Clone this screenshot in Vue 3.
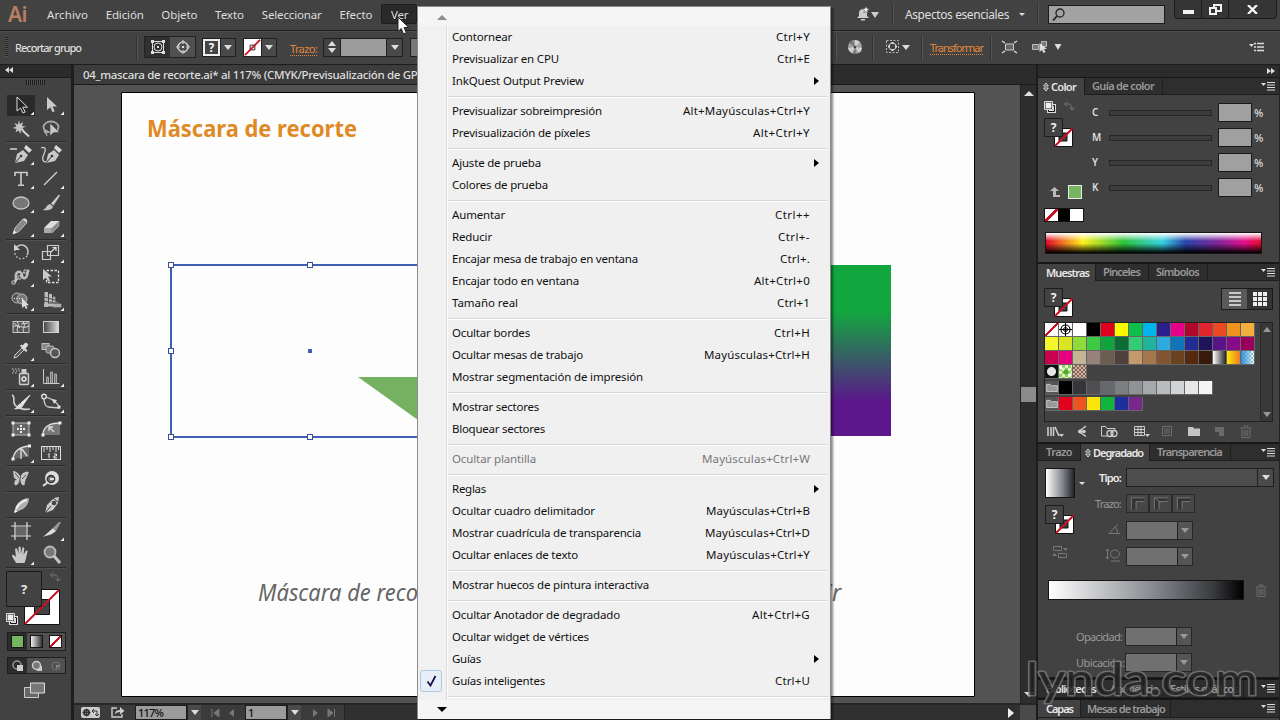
<script setup>
import { ref } from "vue";

// Tracks a label out or in so that it takes exactly the given width in px.
const vFit = {
  mounted(el, { value }) {
    const natural = el.getBoundingClientRect().width;
    const count = el.textContent.trim().length;
    el.style.letterSpacing = `${((value - natural) / count).toFixed(3)}px`;
  },
};

const mainMenu = [
  { label: "Archivo", w: 41 },
  { label: "Edición", w: 38 },
  { label: "Objeto", w: 36 },
  { label: "Texto", w: 29 },
  { label: "Seleccionar", w: 60 },
  { label: "Efecto", w: 33 },
  { label: "Ver", w: 17 },
];
const openMenu = ref("Ver");

const viewMenu = [
  [
    { label: "Contornear", w: 60, key: "Ctrl+Y", kw: 34 },
    { label: "Previsualizar en CPU", w: 107, key: "Ctrl+E", kw: 33 },
    { label: "InkQuest Output Preview", w: 132, sub: true },
  ],
  [
    { label: "Previsualizar sobreimpresión", w: 150, key: "Alt+Mayúsculas+Ctrl+Y", kw: 127 },
    { label: "Previsualización de píxeles", w: 138, key: "Alt+Ctrl+Y", kw: 57 },
  ],
  [
    { label: "Ajuste de prueba", w: 89, sub: true },
    { label: "Colores de prueba", w: 96 },
  ],
  [
    { label: "Aumentar", w: 53, key: "Ctrl++", kw: 35 },
    { label: "Reducir", w: 40, key: "Ctrl+-", kw: 32 },
    { label: "Encajar mesa de trabajo en ventana", w: 186, key: "Ctrl+.", kw: 30 },
    { label: "Encajar todo en ventana", w: 127, key: "Alt+Ctrl+0", kw: 56 },
    { label: "Tamaño real", w: 66, key: "Ctrl+1", kw: 33 },
  ],
  [
    { label: "Ocultar bordes", w: 78, key: "Ctrl+H", kw: 36 },
    { label: "Ocultar mesas de trabajo", w: 131, key: "Mayúsculas+Ctrl+H", kw: 106 },
    { label: "Mostrar segmentación de impresión", w: 191 },
  ],
  [
    { label: "Mostrar sectores", w: 87 },
    { label: "Bloquear sectores", w: 93 },
  ],
  [{ label: "Ocultar plantilla", w: 84, key: "Mayúsculas+Ctrl+W", kw: 108, disabled: true }],
  [
    { label: "Reglas", w: 34, sub: true },
    { label: "Ocultar cuadro delimitador", w: 143, key: "Mayúsculas+Ctrl+B", kw: 104 },
    { label: "Mostrar cuadrícula de transparencia", w: 189, key: "Mayúsculas+Ctrl+D", kw: 105 },
    { label: "Ocultar enlaces de texto", w: 126, key: "Mayúsculas+Ctrl+Y", kw: 104 },
  ],
  [{ label: "Mostrar huecos de pintura interactiva", w: 197 }],
  [
    { label: "Ocultar Anotador de degradado", w: 168, key: "Alt+Ctrl+G", kw: 58 },
    { label: "Ocultar widget de vértices", w: 137 },
    { label: "Guías", w: 29, sub: true },
    { label: "Guías inteligentes", w: 93, key: "Ctrl+U", kw: 35, checked: true },
  ],
];

// Tool icons, drawn in a 30x24 cell. `more` puts the flyout corner on the cell.
const toolGroups = [
  [
    { active: true, more: true, svg: '<path d="M11 4v14l3.500-3 2.500 5 2.200-1-2.400-4.800h4.700z" fill="#222" stroke="#ddd"/>' },
    { more: true, svg: '<path d="M11 4v13l3.300-2.800 2.200 5 2.200-1-2.200-4.600h4.500z" fill="#c9c9c9"/>' },
    { svg: '<path d="M13 3l1 4 3-2-1 4 4 .5-3.500 1.500 2 3-3.500-1-.5 4-2-3.500-3 2 1-3.500-4-1 4-1.500-2-3.500 3.500 1.500z" fill="#c4c4c4"/><path d="M16 13l7 6.500" stroke="#d0d0d0" stroke-width="2"/>' },
    { svg: '<ellipse cx="15" cy="10" rx="7.500" ry="5.500" fill="none" stroke="#aaa" stroke-width="1.800"/><path d="M10 13c-3 1-2 4 1 3s0-3-2-2l2 5" fill="none" stroke="#bbb"/><path d="M14 6v13l3.500-3.500h6z" fill="#c8c8c8" stroke="#444" stroke-width=".6"/>' },
  ],
  [
    { more: true, svg: '<path d="M4 6h7" stroke="#d5d5d5" stroke-width="1.500"/><path d="M9 20l2-9 6-4 5 5-4 6z" fill="#c9c9c9"/><path d="M18 5l2-3 6 5-3 3z" fill="#d9d9d9"/><path d="M9.500 19.500l5-6" stroke="#333"/><circle cx="15" cy="13" r="1.300" fill="#333"/>' },
    { svg: '<path d="M5 5c5-2 5 2 3 6s-2 8 2 8" fill="none" stroke="#d0d0d0" stroke-width="1.300"/><path d="M10 20l2-9 6-4 5 5-4 6z" fill="#c9c9c9"/><path d="M18 5l2-3 6 5-3 3z" fill="#d9d9d9"/><path d="M10.500 19.500l5-6" stroke="#333"/><circle cx="16" cy="13" r="1.300" fill="#333"/>' },
    { more: true, svg: '<path d="M9 9V5.500h12V9M15 6v12M12 18.200h6" fill="none" stroke="#ccc" stroke-width="1.600"/>' },
    { more: true, svg: '<path d="M8 18L21 5" stroke="#ccc" stroke-width="1.400"/>' },
    { more: true, svg: '<ellipse cx="15" cy="12" rx="8" ry="6" fill="#777" stroke="#c4c4c4" stroke-width="1.300"/>' },
    { more: true, svg: '<path d="M23 3.500l1 1-6.500 10-2.500-2z" fill="#ccc"/><path d="M14 13l3 2.500c-1 4-6 4-10.500 3.500 4-1 3.500-5 7.500-6z" fill="#c4c4c4"/>' },
    { more: true, svg: '<path d="M7 19l2-6 8-9 4 3.500-8 9z" fill="#888" stroke="#c0c0c0"/><path d="M17 4c2-1.500 5 .5 4 3.500z" fill="#ddd"/><path d="M7 19l1-3.500 2.500 2z" fill="#eee"/>' },
    { more: true, svg: '<path d="M8 13l7-7h8l-7 7z" fill="#ddd"/><path d="M8 13v5h7.500v-5z" fill="#aaa"/><path d="M16 13l7-7v5l-7 7z" fill="#8a8a8a" stroke="#c5c5c5" stroke-width=".6"/>' },
  ],
  [
    { more: true, svg: '<path d="M10 7a6.500 6.500 0 0 1 11 7" fill="none" stroke="#c8c8c8" stroke-width="1.500"/><path d="M21 15a6.800 6.800 0 0 1-12-6" fill="none" stroke="#c8c8c8" stroke-width="1.400" stroke-dasharray="1.500 2"/><path d="M8 3v6h6z" fill="#d0d0d0"/>' },
    { more: true, svg: '<path d="M11.500 4.500h11v10h-11zM6.500 10.500h8v8h-8z" fill="none" stroke="#ccc" stroke-width="1.200"/><path d="M15 11l5-5M16.500 6.500H20V10" fill="none" stroke="#ddd" stroke-width="1.200"/>' },
    { more: true, svg: '<path d="M7 18c6-1 0-9 5-11s3 8 7 6 1-6 4-8" fill="none" stroke="#bbb" stroke-width="2.600"/><path d="M8 18L19 6" stroke="#ddd"/><path d="M6 16h3v3H6zM12 11h3v3h-3zM18 5h3v3h-3z" fill="#444" stroke="#ddd" stroke-width=".8"/>' },
    { svg: '<path d="M10.500 5.500h12v12h-12z" fill="none" stroke="#ddd" stroke-dasharray="2.500 1.500" stroke-width="1.300"/><path d="M7 4v11l3-2.500 2 4 2-1-2-4h4z" fill="#ccc"/>' },
    { more: true, svg: '<circle cx="11" cy="9" r="5" fill="#555" stroke="#bbb"/><circle cx="16" cy="10" r="5" fill="#777" stroke="#bbb"/><path d="M8 9.500h9" stroke="#eee" stroke-dasharray="1 1.500"/><path d="M16 9v10l2.500-2 1.500 3 1.500-.8-1.400-2.900H23z" fill="#ddd"/>' },
    { more: true, svg: '<path d="M8.500 3h3.500v15H8.500zM13 5h3v9h-3zM8 14.500h10v3H8z" fill="#bbb"/><path d="M17 8h2v6h-2zM17 15h8v3h-8zM17 12l5 2" fill="#aaa" stroke="#bbb" stroke-width=".6"/><path d="M8 8l11 3M8 12l11 2" stroke="#555"/>' },
  ],
  [
    { svg: '<rect x="7" y="6.500" width="16" height="11" fill="#555" stroke="#c8c8c8"/><path d="M7 12c5-4 9 3 16-1M11 7c4 3-2 7 1 10M17 7c4 3-2 7 1 10M8 8l6 5M15 9l7-1" fill="none" stroke="#ddd"/>' },
    { svg: '<defs><linearGradient id="gt"><stop offset="0" stop-color="#444"/><stop offset="1" stop-color="#ddd"/></linearGradient></defs><rect x="7.500" y="6.500" width="15" height="11" fill="url(#gt)" stroke="#d0d0d0"/>' },
    { more: true, svg: '<path d="M8 19l1-3 7-7 2 2-7 7z" fill="#555" stroke="#ccc"/><path d="M14 7l6 6 1.500-1.500-2-2 2.500-3c.8-1.200-1.500-3.500-3-2.500l-2.500 2.500-1.200-1z" fill="#ddd"/>' },
    { svg: '<rect x="6" y="4.500" width="7" height="6" fill="#888" stroke="#bbb"/><rect x="10" y="7" width="8" height="7" rx="2" fill="#777" stroke="#bbb"/><circle cx="19" cy="14" r="4.500" fill="#555" stroke="#c4c4c4" stroke-width="1.400"/>' },
  ],
  [
    { more: true, svg: '<rect x="13.500" y="8.500" width="9" height="11" rx="1" fill="#555" stroke="#ccc" stroke-width="1.400"/><path d="M15.500 4h5v4h-5z" fill="#ccc"/><circle cx="18" cy="14" r="2" fill="none" stroke="#eee" stroke-width="1.300"/><path d="M6 4h8M7 6h7M6 8h5" stroke="#ccc" stroke-dasharray="1.500 1.500"/>' },
    { more: true, svg: '<path d="M7.500 4v14.500h16" fill="none" stroke="#ccc"/><path d="M10.500 18v-6h2v6M14.500 18V7h2v11M18.500 18V9h2v9" fill="#777" stroke="#bbb" stroke-width=".8"/>' },
  ],
  [
    { more: true, svg: '<path d="M6 4c4 2 0 6 3 10s10 5 15 4" fill="none" stroke="#ccc" stroke-width="1.600"/><path d="M24 4l-9 8 2 2z" fill="#eee" stroke="#ddd"/><path d="M15 12l2.500 2.500c-2 4-6 4-10 3.500 4-1 4-5 7.500-6z" fill="#ddd"/>' },
    { more: true, svg: '<path d="M8 7c0 4 1 8 4 9l11 1c0-4-6-9-13-11" fill="none" stroke="#ccc" stroke-width="1.300"/><circle cx="8" cy="5.500" r="2.300" fill="#444" stroke="#ddd" stroke-width="1.400"/><path d="M16 8l5 1-3 4zM21.500 14.500h3v3h-3z" fill="#ddd"/>' },
  ],
  [
    { svg: '<rect x="7" y="6" width="16" height="12" rx="2" fill="#666" stroke="#bbb"/><path d="M5.500 4.500h3v3h-3zM21.500 4.500h3v3h-3zM5.500 16.500h3v3h-3zM21.500 16.500h3v3h-3z" fill="#eee"/><path d="M15 8v8M11 12h8" stroke="#eee" stroke-width="2" stroke-dasharray="2 1"/>' },
    { svg: '<path d="M7 18c0-8 6-12 17-12v12z" fill="#777"/><path d="M7 18c0-8 6-12 17-12M18 15l-5-5m0 4v-4h4" fill="none" stroke="#ddd" stroke-width="1.300"/><path d="M5.500 16.500h3v3h-3zM22.500 4.500h3v3h-3z" fill="#eee"/>' },
    { more: true, svg: '<path d="M8 18C9 10 14 6 23 5v11h-5z" fill="#666"/><path d="M7 18C8 10 13 6 23 5M15 7v11M16 8l5 7" fill="none" stroke="#ddd" stroke-width="1.400"/><path d="M5.500 16.500h3v3h-3zM22 3.500h3v3h-3z" fill="#eee"/>' },
    { svg: '<rect x="5.500" y="5.500" width="19" height="13" fill="#444" stroke="#ddd"/><path d="M8 6v5M11 6v3M14 6v5M17 6v3M20 6v5M22.500 6v3" stroke="#ddd"/><path d="M12 13.500l1-1V17M18 13h2.500v2H18v2h3" fill="none" stroke="#eee"/>' },
  ],
  [
    { svg: '<path d="M14.500 10C12 4 7 4 7 4l1 7c1 1 3 1 3 1-3 1-3 5-2 6s4-1 5.500-5c0 4 2 6 4 5l1-5 3.500-8c-5-1-7.500 2-8.500 5z" fill="#c4c4c4"/><path d="M14.500 10l-1.500 6M9 6l4 5M20 8l-4 4" stroke="#555"/>' },
    { svg: '<circle cx="16" cy="11" r="7" fill="#ddd"/><circle cx="15" cy="12" r="3.600" fill="#777" stroke="#333" stroke-width="1.500"/><path d="M7 19l5-4M14 12h4" stroke="#ddd" stroke-width="2"/>' },
  ],
  [
    { svg: '<path d="M8 20l2-7q5-8 13-8 0 7-6 11z" fill="#b0b0b0"/><path d="M10 16c2-4 6-8 11-9" fill="none" stroke="#eee" stroke-width="2"/><path d="M8 20l1-3.500 2.500 2z" fill="#fff"/>' },
    { svg: '<path d="M9 20l2-8 7-7 5-1-1 6-5 7z" fill="#ccc"/><circle cx="18" cy="10" r="2.300" fill="#444"/><path d="M9 20l6-7M17 5l5 4" stroke="#333"/>' },
  ],
  [
    { svg: '<path d="M5 7h20M5 17h20M9 3v18M21 3v18" stroke="#ddd" stroke-width="1.200"/><path d="M10 8h10v8H10z" fill="#666"/>' },
    { more: true, svg: '<path d="M7 18l10-9 3 3c-4 4-8 4-13 6z" fill="#ddd"/><path d="M17 9l6-6h2l-5 9z" fill="#999"/>' },
    { more: true, svg: '<path d="M10 20c-1-3-4-5-4-8 1-1 3 1 4 2L9 6c1-1.500 2-1 2.500 1l1 4V4.500c1-1.500 2-1 2.300 0V11l1.500-6c1-1.300 2-.6 2 .8l-.8 6 2.500-4c1-1 2 0 1.500 1.200-1 3-1.500 8-3 11z" fill="#c8c8c8"/>' },
    { svg: '<circle cx="14" cy="9" r="5.500" fill="#777" stroke="#bbb" stroke-width="1.800"/><path d="M18 13l6 7" stroke="#c4c4c4" stroke-width="3"/>' },
  ],
];

const channels = ["C", "M", "Y", "K"];

const swatchRows = [
  ["none", "reg", "#ffffff", "#000000", "#e2001f", "#fffa00", "#0dbe4c", "#00b5ec", "#2a1f8d", "#e5008b", "#b0082a", "#e0252f", "#ea4924", "#f0911e", "#f4ae3b"],
  ["#f5f72c", "#d8e522", "#8edb3c", "#3dcb46", "#10a53c", "#0a6e33", "#33cb73", "#1fb49b", "#2babdf", "#0f74b8", "#222d93", "#1d145a", "#5a1489", "#870a86", "#98005c"],
  ["#c8004f", "#e6007e", "#c4b694", "#97827b", "#6b5e50", "#4f403b", "#c39a6b", "#a5774c", "#81552f", "#6d4220", "#55290f", "#371a0c", "gray", "sun", "sky"],
  ["dot", "leaf", "rug"],
];
const swatchFolders = [
  ["#000000", "#363438", "#4f4f53", "#67686d", "#7c7e81", "#909396", "#a5a8ac", "#b9bbbf", "#d1d3d6", "#e7e7e8", "#f5f5f5"],
  ["#e2001f", "#ea5520", "#fbe50a", "#10b63c", "#1c2f9c", "#77278e"],
];

function isColor(swatch) {
  return swatch.startsWith("#");
}

const handles = [
  [171, 265],
  [310, 265],
  [171, 351],
  [171, 437],
  [310, 437],
];
</script>

<template>
  <div class="app">
    <svg width="0" height="0" class="defs">
      <symbol id="proxy" viewBox="0 0 30 30">
        <path d="M10.500 10.500h18v18h-18z" fill="#fff" stroke="#111" />
        <path d="M15 15h8v8h-8z" fill="#3d3d3d" stroke="#111" />
        <path d="M11 28L28.500 10.500" stroke="#c8101e" stroke-width="2" />
        <path d="M.5.500h18v18H.5z" fill="#434343" stroke="#1c1c1c" />
        <text x="9.500" y="14" text-anchor="middle" fill="#f0f0f0" font-size="12" font-weight="700">?</text>
      </symbol>
      <symbol id="defaults" viewBox="0 0 12 12">
        <path d="M4.500 4.500h6v6h-6z" fill="none" stroke="#ddd" stroke-width="3" />
        <path d="M4.500 4.500h6v6h-6z" fill="none" stroke="#111" />
        <path d="M1 1h7v7H1z" fill="#eee" stroke="#111" />
        <path d="M.5.500h8v8h-8z" fill="none" stroke="#ddd" />
      </symbol>
      <symbol id="swap" viewBox="0 0 12 10">
        <path d="M2 3h4q3 0 3 5M4 .5L1.500 3 4 5.500M6.500 6.500L9 9l2.500-2.500" fill="none" stroke="#777" />
      </symbol>
      <symbol id="panelmenu" viewBox="0 0 14 10">
        <path d="M0 2h5L2.500 5z" fill="#ddd" />
        <path d="M6 1.500h8M6 4h8M6 6.500h8M6 9h8" stroke="#ddd" stroke-width="1.200" />
      </symbol>
      <symbol id="trash" viewBox="0 0 12 13">
        <path d="M.5 3h11M4 2.500V1h4v1.500M2 4v8.500h8V4M4.200 5v6M6 5v6M7.800 5v6" fill="none" stroke="#6c6c6c" />
      </symbol>
      <symbol id="folder" viewBox="0 0 13 10">
        <path d="M.5 9.500v-8h4l1.500 1.500h6.500v6.500z" fill="#999" stroke="#ccc" />
      </symbol>
      <symbol id="updown" viewBox="0 0 6 10">
        <path d="M.7 4L3 1l2.300 3zM.7 6L3 9l2.300-3z" fill="none" stroke="#ddd" />
      </symbol>
    </svg>

    <header class="menubar">
      <span class="logo">Ai</span>
      <nav>
        <span v-for="m in mainMenu" :key="m.label" class="menu-title" :class="{ open: m.label === openMenu }">
          <span v-fit="m.w">{{ m.label }}</span>
        </span>
      </nav>
      <div class="menubar-right">
        <svg class="bell" width="24" height="17" viewBox="0 0 24 17">
          <path d="M1 12l2-2V6q1-3 4-3 3 0 4 3v4l2 2z" fill="#ccc" />
          <path d="M5 13h4v1.500H5z" fill="#ccc" />
          <path d="M10 0l1 2.500 2.500.2-2 1.600.7 2.500L10 5.500 7.800 6.800l.7-2.500-2-1.600L9 2.500z" fill="#eee" stroke="#444" stroke-width=".5" />
          <path d="M15 6h8l-4 6z" fill="#ccc" />
        </svg>
        <i class="vline"></i>
        <span v-fit="104" class="workspace">Aspectos esenciales</span>
        <i class="tri small"></i>
        <i class="vline after"></i>
        <div class="search">
          <svg width="14" height="14" viewBox="0 0 14 14">
            <circle cx="8" cy="5" r="4" fill="none" stroke="#222" stroke-width="1.300" />
            <path d="M5 8l-4 4.500" stroke="#222" stroke-width="1.800" />
          </svg>
        </div>
        <div class="win-buttons">
          <span><i class="minimize"></i></span>
          <span>
            <svg width="13" height="11" viewBox="0 0 13 11">
              <path d="M5 1h7v6H5z" fill="none" stroke="#f2f2f2" stroke-width="2" />
              <path d="M1 4h6v6H1z" fill="#333" stroke="#f2f2f2" stroke-width="2" />
            </svg>
          </span>
          <span class="close">
            <svg width="11" height="9" viewBox="0 0 11 9">
              <path d="M1 0l9 9M10 0L1 9" stroke="#f2f2f2" stroke-width="2.400" />
            </svg>
          </span>
        </div>
      </div>
    </header>

    <div class="controlbar">
      <i class="grip-v"></i>
      <div class="selection-kind"><span v-fit="66">Recortar grupo</span></div>
      <i class="vline tall"></i>
      <div class="pair">
        <span class="on">
          <svg width="16" height="16" viewBox="0 0 16 16">
            <path d="M2.500 2.500h11v11h-11z" fill="none" stroke="#ddd" />
            <circle cx="8" cy="8" r="4" fill="none" stroke="#ddd" />
            <path d="M1 1h3v3H1zM12 1h3v3h-3zM1 12h3v3H1zM12 12h3v3h-3zM7 7h2v2H7z" fill="#ddd" />
          </svg>
        </span>
        <span>
          <svg width="16" height="16" viewBox="0 0 16 16">
            <circle cx="8" cy="8" r="5" fill="none" stroke="#ddd" stroke-width="1.200" />
            <path d="M7 7h2v2H7z" fill="#ddd" />
            <path d="M7 2h2v2H7zM7 12h2v2H7zM2 7h2v2H2zM12 7h2v2h-2z" fill="#555" stroke="#ddd" />
          </svg>
        </span>
      </div>
      <div class="drop-swatch fill-drop">
        <span class="q">?</span>
        <span class="arrow"><i class="tri"></i></span>
      </div>
      <div class="drop-swatch">
        <svg class="none" width="18" height="18" viewBox="0 0 18 18">
          <path d="M0 0h18v18H0z" fill="#fff" />
          <path d="M6.500 6.500h5v5h-5z" fill="none" stroke="#222" />
          <path d="M1 17L17 1" stroke="#c8101e" stroke-width="1.800" />
        </svg>
        <span class="arrow"><i class="tri"></i></span>
      </div>
      <span v-fit="27" class="link stroke-link">Trazo:</span>
      <div class="stroke-field">
        <span class="spin"><i class="tri up"></i><i class="tri"></i></span>
        <span class="value"></span>
        <span class="arrow"><i class="tri"></i></span>
      </div>
      <div class="stub"></div>

      <div class="control-right">
        <i class="vline tall"></i>
        <svg class="recolor" width="16" height="16" viewBox="0 0 16 16">
          <circle cx="8" cy="8" r="7" fill="#a2a2a2" />
          <path d="M8 8V1a7 7 0 0 1 5 2zM8 8l7 1a7 7 0 0 1-3 5zM8 8l-3 6a7 7 0 0 1-4-5z" fill="#cfcfcf" />
          <path d="M8 8L2 4a7 7 0 0 1 4-3zM8 8l1 7H6z" fill="#777" />
          <circle cx="8" cy="8" r="1.300" fill="#444" />
        </svg>
        <i class="vline tall"></i>
        <svg class="align" width="24" height="14" viewBox="0 0 24 14">
          <path d="M.5.500h12v12H.5z" fill="none" stroke="#bbb" stroke-dasharray="2 1.500" />
          <circle cx="6.500" cy="6.500" r="3.500" fill="none" stroke="#ccc" />
          <path d="M5.500 2h2v2h-2zM5.500 9h2v2h-2zM2 5.500h2v2H2zM9 5.500h2v2H9z" fill="#ddd" />
          <path d="M16 5h8l-4 5z" fill="#ddd" />
        </svg>
        <i class="vline tall"></i>
        <span v-fit="53" class="link">Transformar</span>
        <i class="vline tall"></i>
        <svg class="isolate" width="17" height="14" viewBox="0 0 17 14">
          <path d="M4.500 4h8v6h-8z" fill="#666" stroke="#ccc" />
          <path d="M1 1l3 2M16 1l-3 2M1 13l3-2M16 13l-3-2" stroke="#ddd" stroke-width="1.400" />
        </svg>
        <svg class="similar" width="30" height="16" viewBox="0 0 30 16">
          <path d="M.5 5.500h6v5h-6zM9.500 2.500h5v5h-5z" fill="#777" stroke="#bbb" />
          <path d="M7.500 4v9l2.500-2 1.500 3 2-1-1.500-3h3z" fill="#ddd" />
          <path d="M22.500 5h7l-3.500 6z" fill="#ddd" />
        </svg>
        <svg class="bar-menu" width="15" height="10" viewBox="0 0 15 10">
          <path d="M0 2h5L2.500 5z" fill="#ddd" />
          <path d="M5 1.500h2M8 1.500h7M5 5h2M8 5h7M5 8.500h2M8 8.500h7" stroke="#ddd" stroke-width="1.600" />
        </svg>
      </div>
    </div>

    <div class="body">
      <aside class="toolbox">
        <div class="toolbox-head">
          <svg width="8" height="6" viewBox="0 0 8 6"><path d="M4 0v6L0 3zM8 0v6L4 3z" fill="#ddd" /></svg>
        </div>
        <div class="grip-wrap"><i class="grip-h"></i></div>
        <div v-for="(group, g) in toolGroups" :key="g" class="tool-group">
          <span v-for="(tool, t) in group" :key="t" class="tool" :class="{ active: tool.active }">
            <svg width="30" height="24" viewBox="0 0 30 24">
              <g v-html="tool.svg" />
              <path v-if="tool.more" d="M28 18.500v3.500h-3.500z" fill="#eee" />
            </svg>
          </span>
        </div>
        <svg class="fill-stroke" width="62" height="58" viewBox="0 0 62 58">
          <path d="M18.500 19.500h35v35h-35z" fill="#fff" stroke="#111" />
          <path d="M28.500 29.500h15v15h-15z" fill="#434343" stroke="#111" />
          <path d="M19 54L53 20" stroke="#c8101e" stroke-width="2" />
          <path d="M.5 1.500h35v35H.5z" fill="#434343" stroke="#1a1a1a" />
          <text x="18" y="24" text-anchor="middle" fill="#e8e8e8" font-size="13" font-weight="700">?</text>
          <use href="#swap" x="43" y="2" width="12" height="10" />
          <use href="#defaults" x="0" y="43" width="12" height="12" />
        </svg>
        <div class="trio paint">
          <span class="on"><i class="chip green"></i></span>
          <span><i class="chip fade"></i></span>
          <span><i class="chip nothing"></i></span>
        </div>
        <div class="trio draw">
          <span class="on">
            <svg width="12" height="12" viewBox="0 0 12 12"><circle cx="5" cy="5" r="4" fill="none" stroke="#999" stroke-width="1.500" /><path d="M5 5h6v6H5z" fill="#ccc" /></svg>
          </span>
          <span>
            <svg width="12" height="12" viewBox="0 0 12 12"><path d="M6 6h5v5H6z" fill="#ccc" /><circle cx="5.500" cy="5.500" r="4" fill="#777" stroke="#ccc" stroke-width="1.500" /></svg>
          </span>
          <span>
            <svg width="12" height="12" viewBox="0 0 12 12"><circle cx="6" cy="6" r="4" fill="none" stroke="#777" /><path d="M6 5h4L6 9z" fill="#888" /></svg>
          </span>
        </div>
        <svg class="screen-mode" width="22" height="17" viewBox="0 0 22 17">
          <path d="M.5 5.500h14v10H.5z" fill="#666" stroke="#ccc" />
          <path d="M6.500 1h14v10h-14z" fill="#777" stroke="#ddd" />
        </svg>
      </aside>

      <main class="document">
        <div class="doc-tabs">
          <span v-fit="346" class="doc-tab">04_mascara de recorte.ai* al 117% (CMYK/Previsualización de GPU)</span>
        </div>
        <div class="doc-main">
          <div class="canvas">
            <svg width="946" height="618" viewBox="74 85 946 618">
              <defs>
                <linearGradient id="art" x1="0" y1="0" x2="0" y2="1">
                  <stop offset="0" stop-color="#12a73e" />
                  <stop offset=".27" stop-color="#12a73e" />
                  <stop offset=".8" stop-color="#5b178b" />
                  <stop offset="1" stop-color="#5b178b" />
                </linearGradient>
              </defs>
              <path d="M121.500 92.500h853v604h-853z" fill="#fdfdfd" stroke="#000" />
              <text class="art-title" x="147" y="137" textLength="210" lengthAdjust="spacingAndGlyphs">Máscara de recorte</text>
              <text class="art-note" x="258" y="601" textLength="160" lengthAdjust="spacingAndGlyphs">Máscara de reco</text>
              <text class="art-note" x="826" y="601">ir</text>
              <path d="M358 377h120v86z" fill="#76b161" />
              <path d="M700 265h191v171H700z" fill="url(#art)" />
              <path d="M171 265h300v172H171z" fill="none" stroke="#3f5fb5" stroke-width="2" />
              <rect v-for="([x, y], i) in handles" :key="i" :x="x - 2.500" :y="y - 2.500" width="5" height="5" fill="#fff" stroke="#3a4f94" />
              <path d="M308 349h4v4h-4z" fill="#3f5fb5" />
            </svg>
          </div>
          <div class="vscroll">
            <i class="tri up big"></i>
            <i class="thumb"></i>
            <i class="tri big"></i>
          </div>
        </div>
        <div class="statusbar">
          <svg width="19" height="11" viewBox="0 0 19 11">
            <rect width="19" height="11" rx="2" fill="#ccc" />
            <circle cx="5.500" cy="5.500" r="2.500" fill="none" stroke="#333" stroke-width="2" />
            <path d="M5.500 1.500v8M1.500 5.500h8" stroke="#333" />
            <path d="M13 2l-2 2 2 2M11 4h5v5M14 7l2 2 2-2" fill="none" stroke="#333" />
          </svg>
          <svg class="share" width="14" height="12" viewBox="0 0 14 12">
            <path d="M6 2H1v9h10V8" fill="none" stroke="#ccc" stroke-width="1.400" />
            <path d="M4 8q0-4 5-4V1l4.500 4L9 8.500V6Q6 6 4 8z" fill="#ccc" />
          </svg>
          <span class="field zoom"><b v-fit="25">117%</b></span>
          <span class="arrow"><i class="tri"></i></span>
          <svg class="nav" width="24" height="8" viewBox="0 0 24 8">
            <path d="M1 0v8M8 0v8L3 4z" stroke="#777" fill="#777" /><path d="M23 0v8l-5-4z" fill="#777" />
          </svg>
          <span class="field page"><b>1</b></span>
          <span class="arrow"><i class="tri"></i></span>
          <svg class="nav next" width="24" height="8" viewBox="0 0 24 8">
            <path d="M1 0v8l5-4z" fill="#777" /><path d="M16 0v8l5-4zM22.500 0v8" stroke="#777" fill="#777" />
          </svg>
          <div class="hscroll"><i class="tri right"></i></div>
          <i class="corner"></i>
        </div>
      </main>

      <aside class="dock">
        <div class="dock-head">
          <svg width="8" height="6" viewBox="0 0 8 6"><path d="M0 0v6l4-3zM4 0v6l4-3z" fill="#ddd" /></svg>
        </div>

        <section class="panel color-panel">
          <div class="tabs">
            <span class="tab on"><svg width="6" height="10"><use href="#updown" /></svg><b v-fit="25">Color</b></span>
            <span class="tab"><b v-fit="62">Guía de color</b></span>
            <svg class="panel-menu" width="14" height="10"><use href="#panelmenu" /></svg>
          </div>
          <div class="color-body">
            <div class="color-left">
              <div class="mini-row">
                <svg width="12" height="12"><use href="#defaults" /></svg>
                <svg width="12" height="10"><use href="#swap" /></svg>
              </div>
              <svg class="proxy" width="30" height="30"><use href="#proxy" /></svg>
              <div class="last-color">
                <svg width="10" height="11" viewBox="0 0 10 11"><path d="M4.500 0L9 4H6v4h4v2H3V4H0z" fill="#bbb" /></svg>
                <i class="chip green"></i>
              </div>
            </div>
            <div class="channels">
              <div v-for="c in channels" :key="c" class="channel">
                <b>{{ c }}</b><i class="track"></i><i class="amount"></i><span>%</span>
              </div>
            </div>
          </div>
          <div class="bw"><i class="nothing"></i><i class="black"></i><i class="white"></i></div>
          <div class="spectrum"></div>
        </section>

        <section class="panel swatch-panel">
          <div class="tabs">
            <span class="tab on"><b v-fit="43">Muestras</b></span>
            <span class="tab"><b v-fit="37">Pinceles</b></span>
            <span class="tab"><b v-fit="43">Símbolos</b></span>
            <svg class="panel-menu" width="14" height="10"><use href="#panelmenu" /></svg>
          </div>
          <div class="swatch-top">
            <svg class="proxy" width="30" height="30"><use href="#proxy" /></svg>
            <div class="views">
              <span class="lit"><svg width="12" height="14" viewBox="0 0 12 14"><path d="M0 1h12M0 5h12M0 9h12M0 13h12" stroke="#eee" stroke-width="1.600" /></svg></span>
              <span><svg width="14" height="14" viewBox="0 0 14 14"><path d="M2 0v14M7 0v14M12 0v14" stroke="#eee" stroke-width="4" stroke-dasharray="4 1" /></svg></span>
            </div>
          </div>
          <div class="swatch-box">
            <div class="swatch-list">
              <div v-for="(row, r) in swatchRows" :key="r" class="swatch-row">
                <template v-for="(s, i) in row" :key="i">
                  <i v-if="isColor(s)" class="sw" :style="{ background: s }"></i>
                  <i v-else-if="s !== 'reg'" class="sw" :class="s"></i>
                  <i v-else class="sw reg">
                    <svg width="13" height="13" viewBox="0 0 13 13"><path d="M6.500 0v13M0 6.500h13" stroke="#000" /><circle cx="6.500" cy="6.500" r="4.500" fill="none" stroke="#000" stroke-width="1.200" /><circle cx="6.500" cy="6.500" r="2" fill="none" stroke="#000" /></svg>
                  </i>
                </template>
              </div>
              <div v-for="(row, r) in swatchFolders" :key="'f' + r" class="swatch-row in-folder">
                <i class="sw dir"><svg width="12" height="9"><use href="#folder" /></svg></i>
                <i v-for="s in row" :key="s" class="sw" :style="{ background: s }"></i>
              </div>
            </div>
            <div class="swatch-scroll"><i class="tri up"></i><i class="tri"></i></div>
          </div>
          <svg class="swatch-tools" width="230" height="18" viewBox="0 0 230 18">
            <path d="M1 4v9M4 4v9M6.500 4v9M8 4l4 9" stroke="#ccc" stroke-width="1.600" />
            <path d="M12 11h5l-2.500 3zM98 11h5l-2.500 3z" fill="#ccc" />
            <path d="M39 3l-7 5.500 7 5M32 8.500h5" fill="none" stroke="#ccc" stroke-width="1.500" />
            <circle cx="37" cy="8.500" r="1.800" fill="#ccc" /><circle cx="33" cy="8.500" r="2" fill="#ccc" />
            <path d="M61 13h-6.500V3.500h4l1.500 2h8V8" fill="none" stroke="#ccc" />
            <circle cx="63" cy="10.500" r="3" fill="none" stroke="#ccc" stroke-width="1.300" /><circle cx="67" cy="10.500" r="3" fill="none" stroke="#ccc" stroke-width="1.300" />
            <path d="M87.500 3.500h10v9h-10zM91 3v10M94 3v10M87 6.500h11M87 9.500h11" fill="none" stroke="#ccc" />
            <path d="M115.500 3.500h9v9h-9zM117 6h6M117 8h6M117 10h6" fill="none" stroke="#6c6c6c" />
            <path d="M141 4h5l1 1.500h6V13h-12z" fill="#c4c4c4" />
            <path d="M168 4h9v9h-5V9h-4z" fill="#6a6a6a" />
            <use href="#trash" x="193" y="2" width="12" height="13" />
          </svg>
        </section>

        <section class="panel gradient-panel">
          <div class="tabs">
            <span class="tab first"><b v-fit="26">Trazo</b></span>
            <span class="tab on"><svg width="6" height="10"><use href="#updown" /></svg><b v-fit="50">Degradado</b></span>
            <span class="tab"><b v-fit="65">Transparencia</b></span>
            <svg class="panel-menu" width="14" height="10"><use href="#panelmenu" /></svg>
          </div>
          <div class="gradient-body">
            <div class="gradient-left">
              <div class="preview"><i class="big-fade"></i><i class="tri small"></i></div>
              <svg class="proxy" width="30" height="30"><use href="#proxy" /></svg>
              <svg class="reverse" width="16" height="14" viewBox="0 0 16 14"><path d="M1.500 1.500h8v4h-8zM6.500 8.500h8v4h-8z" fill="none" stroke="#777" /><path d="M11 3h5l-2.500 3zM0 11h5L2.500 8z" fill="#777" /></svg>
            </div>
            <div class="gradient-form">
              <div class="row lit"><label v-fit="22">Tipo:</label><span class="combo"><i></i><span class="arrow"><i class="tri"></i></span></span></div>
              <div class="row"><label v-fit="26">Trazo:</label>
                <span class="joins">
                  <svg v-for="n in 3" :key="n" width="22" height="18" viewBox="0 0 22 18"><path d="M5 15V3h13v3H9v9z" fill="#333" /><path d="M4.500 15V3h14M9.500 15V7h9" fill="none" stroke="#777" /><path v-if="n === 2" d="M5 3l6 5" stroke="#777" /></svg>
                </span>
              </div>
              <div class="row"><svg width="14" height="12" viewBox="0 0 14 12"><path d="M11 1L2 10.500h11M8 4q3 3 2.500 6" fill="none" stroke="#777" /></svg><span class="num"><i></i><span class="arrow"><i class="tri"></i></span></span></div>
              <div class="row"><svg width="16" height="14" viewBox="0 0 16 14"><path d="M2.500 1v10M1 3l1.500-2L4 3M1 9l1.500 2L4 9M6 13h9" fill="none" stroke="#777" /><ellipse cx="10" cy="6" rx="4.500" ry="4" fill="none" stroke="#777" /></svg><span class="num"><i></i><span class="arrow"><i class="tri"></i></span></span></div>
            </div>
          </div>
          <div class="ramp"><i></i><svg width="12" height="13"><use href="#trash" /></svg></div>
          <div class="row stop"><label v-fit="44">Opacidad:</label><span class="num"><i></i><span class="arrow"><i class="tri"></i></span></span></div>
          <div class="row stop"><label v-fit="45">Ubicación:</label><span class="num"><i></i><span class="arrow"><i class="tri"></i></span></span></div>
        </section>

        <section class="panel folded">
          <div class="tabs">
            <span class="tab strong"><b v-fit="50">Bibliotecas</b></span>
            <span class="tab"><b v-fit="48">Apariencia</b></span>
            <span class="tab"><b v-fit="68">Estilos gráficos</b></span>
            <svg class="panel-menu" width="14" height="10"><use href="#panelmenu" /></svg>
          </div>
        </section>
        <section class="panel folded">
          <div class="tabs">
            <span class="tab on"><b v-fit="27">Capas</b></span>
            <span class="tab"><b v-fit="78">Mesas de trabajo</b></span>
            <svg class="panel-menu" width="14" height="10"><use href="#panelmenu" /></svg>
          </div>
        </section>
      </aside>
    </div>

    <svg class="watermark" width="256" height="64" viewBox="0 0 256 64">
      <text x="2" y="43" textLength="232" lengthAdjust="spacingAndGlyphs">lynda.com</text>
    </svg>

    <div class="view-menu">
      <div class="scroll-edge"><i class="tri up"></i></div>
      <div class="menu-body">
        <div v-for="(group, g) in viewMenu" :key="g" class="menu-group">
          <div v-for="item in group" :key="item.label" class="menu-item" :class="{ disabled: item.disabled }">
            <span class="gutter">
              <span v-if="item.checked" class="check">
                <svg width="11" height="12" viewBox="0 0 11 12"><path d="M1.500 6.500l3 4L9.500 1" fill="none" stroke="#14144a" stroke-width="1.800" /></svg>
              </span>
            </span>
            <span v-fit="item.w">{{ item.label }}</span>
            <span v-if="item.key" v-fit="item.kw" class="shortcut">{{ item.key }}</span>
            <i v-if="item.sub" class="submenu"></i>
          </div>
        </div>
      </div>
      <div class="scroll-edge bottom"><i class="tri"></i></div>
    </div>

    <svg class="cursor" width="14" height="20" viewBox="0 0 14 20">
      <path d="M1 1v14.500l3.200-3 2.300 5.500 2.800-1.200L7 11.500h4.700z" fill="#fff" stroke="#222" />
    </svg>
  </div>
</template>

<style>
body {
  margin: 0;
  overflow: hidden;
  background: #424242;
}
</style>

<style scoped>
.app {
  position: relative;
  width: 1280px;
  height: 720px;
  overflow: hidden;
  display: flex;
  flex-direction: column;
  background: #424242;
  color: #dedede;
  font-family: "Noto Sans", "Open Sans", sans-serif;
  font-size: 11.5px;
}

.app * {
  box-sizing: border-box;
}

.app span,
.app b,
.app label {
  white-space: nowrap;
}

svg {
  display: block;
  flex: none;
}

.defs {
  position: absolute;
}

i {
  display: block;
  flex: none;
}

.tri {
  width: 0;
  height: 0;
  border: 4px solid transparent;
  border-top: 5px solid #ddd;
  border-bottom: 0;
}

.tri.up {
  border-top: 0;
  border-bottom: 5px solid #ddd;
}

.tri.small {
  border-width: 3px 3px 0;
}

.tri.big {
  border-left-width: 5px;
  border-right-width: 5px;
}

.tri.right {
  border: 5px solid transparent;
  border-left: 6px solid #eee;
  border-right: 0;
}

.vline {
  width: 2px;
  height: 20px;
  background: #333;
  border-right: 1px solid #555;
}

.vline.tall {
  height: 25px;
}

.link {
  color: #e2883c;
  font-size: 11px;
  line-height: 13px;
  border-bottom: 1px dotted #e2883c;
}

/* menu bar */
.menubar {
  height: 31px;
  display: flex;
  align-items: center;
  padding-bottom: 2px;
  border-bottom: 1px solid #1c1c1c;
  background: #424242;
}

.logo {
  width: 38px;
  padding-left: 8px;
  color: #b67f62;
  font-size: 21px;
  font-weight: 600;
  line-height: 28px;
  letter-spacing: -.5px;
}

nav {
  display: flex;
}

.menu-title {
  display: flex;
  height: 20px;
  align-items: center;
  padding: 0 8px 0 9px;
  margin-right: .7px;
}

.menu-title.open {
  background: #292929;
  border: 1px solid #1d1d1d;
  border-radius: 2px;
}

.menubar-right {
  margin-left: auto;
  width: 424px;
  height: 28px;
  display: flex;
  align-items: center;
}

.bell {
  margin-right: 12px;
}

.workspace {
  margin: 0 10px 0 11px;
  font-size: 12px;
}

.after {
  margin: 0 9px 0 12px;
}

.search {
  width: 117px;
  height: 19px;
  padding: 2px 3px;
  background: #a2a2a2;
  border: 1px solid #1c1c1c;
}

.win-buttons {
  display: flex;
  align-self: flex-start;
  height: 19px;
  margin-left: 9px;
  border: 1px solid #1b1b1b;
  border-top: 0;
  border-radius: 0 0 4px 4px;
  background: #353535;
}

.win-buttons span {
  width: 27px;
  display: grid;
  place-items: center;
  border-right: 1px solid #1b1b1b;
}

.win-buttons .close {
  width: 47px;
  border: 0;
}

.minimize {
  width: 11px;
  height: 4px;
  margin-top: 6px;
  background: #f2f2f2;
}

/* control bar */
.controlbar {
  height: 34px;
  flex: none;
  display: flex;
  align-items: center;
  padding-bottom: 2px;
  border-top: 1px solid #505050;
  border-bottom: 1px solid #1c1c1c;
}

.grip-v {
  width: 3px;
  height: 20px;
  margin: 0 7px 0 5px;
  background: repeating-linear-gradient(#222 0 1px, #555 1px 2px);
}

.selection-kind {
  display: flex;
  width: 121px;
  font-size: 11px;
  font-weight: 500;
}

.pair {
  display: flex;
  margin-left: 6px;
  border: 1px solid #222;
}

.pair span {
  width: 25px;
  height: 20px;
  display: grid;
  place-items: center;
  background: #505050;
}

.pair .on {
  background: #303030;
}

.drop-swatch {
  display: flex;
  height: 19px;
  margin-left: 7px;
  border: 1px solid #202020;
}

.drop-swatch.fill-drop {
  margin-left: 6px;
}

.drop-swatch .arrow {
  width: 15px;
}

.q {
  width: 17px;
  border: 2px solid #eee;
  background: #444;
  color: #fff;
  font-weight: 700;
  line-height: 13px;
  text-align: center;
}

.none {
  width: 17px;
  height: 17px;
}

.arrow {
  width: 16px;
  display: grid;
  place-items: center;
  border-left: 1px solid #202020;
  background: #4a4a4a;
}

.stroke-link {
  margin: 4px 6px 0 13px;
}

.stroke-field {
  display: flex;
  height: 19px;
  border: 1px solid #202020;
}

.spin {
  width: 16px;
  display: flex;
  flex-direction: column;
  align-items: center;
  justify-content: space-evenly;
}

.value {
  width: 46px;
  border-left: 1px solid #202020;
  background: #9c9c9c;
}

.stub {
  width: 10px;
  height: 19px;
  margin-left: 7px;
  background: #777;
  border: 1px solid #202020;
}

.control-right {
  margin-left: auto;
  width: 445px;
  display: flex;
  align-items: center;
}

.recolor {
  margin: 0 9px 0 10px;
}

.align {
  margin: 0 11px 0 12px;
}

.control-right .link {
  margin: 2px 7px 0;
}

.isolate {
  margin: 0 14px 0 9px;
}

.bar-menu {
  margin: 0 16px 0 auto;
}

.body {
  flex: 1;
  min-height: 0;
  display: flex;
}

/* toolbox */
.toolbox {
  width: 74px;
  display: flex;
  flex-direction: column;
  border-right: 3px solid #1e1e1e;
}

.toolbox-head {
  height: 13px;
  padding: 2px 5px;
  background: #2b2b2b;
  border-bottom: 1px solid #1a1a1a;
}

.grip-wrap {
  height: 15px;
  padding: 2px 0 0 26px;
}

.grip-h {
  width: 19px;
  height: 5px;
  background: repeating-linear-gradient(90deg, #1c1c1c 0 1px, #505050 1px 2px);
}

.tool-group {
  display: flex;
  flex-wrap: wrap;
  margin: 0 5px 0 6px;
  border-bottom: 1px solid #505050;
  box-shadow: inset 0 -1px #2a2a2a;
  padding-bottom: 1px;
}

.tool {
  width: 30px;
  height: 24px;
}

.tool.active {
  background: linear-gradient(#2a2a2a, #2a2a2a) center / 28px 21px no-repeat;
}

.fill-stroke {
  margin: 1px 0 0 6px;
}

.trio {
  display: flex;
  width: 59px;
  margin-left: 7px;
  border: 1px solid #1e1e1e;
}

.trio span {
  flex: 1;
  display: grid;
  place-items: center;
  background: #505050;
}

.trio .on {
  background: #2c2c2c;
}

.paint {
  height: 19px;
  margin-top: 4px;
}

.draw {
  height: 17px;
  margin-top: 6px;
}

.chip {
  width: 13px;
  height: 13px;
  border: 1px solid #161616;
}

.green {
  background: #76b562;
}

.fade {
  background: linear-gradient(90deg, #eee, #333);
}

.nothing {
  background: linear-gradient(135deg, #fff 42%, #c8101e 42% 58%, #fff 58%);
}

.screen-mode {
  margin: 8px 0 0 24px;
}

/* document */
.document {
  width: 962px;
  display: flex;
  flex-direction: column;
}

.doc-tabs {
  height: 20px;
  flex: none;
  background: linear-gradient(90deg, #3c3c3c 430px, #2c2c2c 430px);
  border-bottom: 1px solid #1a1a1a;
}

.doc-tab {
  display: inline-block;
  margin-left: 9px;
  font-weight: 500;
  line-height: 20px;
}

.doc-main {
  height: 618px;
  display: flex;
}

.canvas {
  width: 946px;
  background: #535353;
}

.art-title {
  fill: #df8a24;
  font-size: 23px;
  font-weight: 700;
}

.art-note {
  fill: #666;
  font-size: 23px;
  font-style: italic;
}

.vscroll {
  width: 16px;
  display: flex;
  flex-direction: column;
  align-items: center;
  justify-content: space-between;
  padding: 6px 0 6px;
  background: #2d2d2d;
  border-left: 1px solid #222;
}

.thumb {
  width: 15px;
  height: 15px;
  background: #8b8b8b;
}

.statusbar {
  flex: 1;
  display: flex;
  align-items: center;
  padding-left: 7px;
  background: #3b3b3b;
  border-top: 2px solid #262626;
  border-bottom: 2px solid #1f1f1f;
}

.share {
  margin: 0 10px 2px 11px;
}

.field {
  height: 15px;
  padding-left: 2px;
  background: #9b9b9b;
  border: 1px solid #1c1c1c;
  color: #111;
  line-height: 14px;
  font-size: 11px;
}

.field b {
  display: inline-block;
  font-weight: 500;
}

.field.zoom {
  width: 52px;
}

.field.page {
  width: 42px;
}

.statusbar .arrow {
  height: 15px;
  width: 14px;
}

.nav {
  margin: 0 10px 0 10px;
}

.nav.next {
  margin: 0 8px 0 11px;
}

.hscroll {
  flex: 1;
  align-self: stretch;
  display: flex;
  align-items: center;
  justify-content: flex-end;
  padding-right: 6px;
  background: #303030;
  border-left: 1px solid #222;
}

.corner {
  width: 16px;
  align-self: stretch;
  background: #4a4a4a;
}

/* dock */
.dock {
  width: 244px;
  display: flex;
  flex-direction: column;
  border-left: 2px solid #1c1c1c;
  border-right: 1px solid #222;
}

.dock-head {
  height: 12px;
  flex: none;
  display: flex;
  justify-content: flex-end;
  padding: 3px 4px;
  background: #2b2b2b;
}

.panel {
  flex: none;
  border-top: 1px solid #161616;
  border-bottom: 1px solid #1a1a1a;
  background: #424242;
}

.tabs {
  height: 17px;
  display: flex;
  align-items: stretch;
  background: #2e2e2e;
  border-bottom: 1px solid #1d1d1d;
}

.tab {
  display: flex;
  align-items: center;
  gap: 2px;
  padding: 0 8px 0 7px;
  border-right: 1px solid #1e1e1e;
  color: #999;
}

.tab b {
  font-size: 11px;
  font-weight: 600;
  line-height: 16px;
}

.tab.first {
  padding-left: 8px;
}

.tab.on {
  height: 17px;
  background: #424242;
  color: #e8e8e8;
}

.tab.strong {
  color: #e8e8e8;
}

.panel-menu {
  margin: 3px 4px 0 auto;
}

.color-panel {
  height: 186px;
}

.color-panel .tab.on {
  padding-left: 5px;
}

.color-body {
  display: flex;
  height: 112px;
}

.color-left {
  width: 54px;
  padding: 6px 0 0 6px;
}

.mini-row {
  display: flex;
  gap: 7px;
}

.proxy {
  margin-top: 5px;
}

.last-color {
  display: flex;
  align-items: center;
  gap: 8px;
  margin: 37px 0 0 6px;
}

.last-color .chip {
  width: 14px;
  height: 14px;
  border-color: #eee;
}

.channels {
  padding-top: 5px;
}

.channel {
  display: flex;
  align-items: center;
  height: 25px;
  line-height: 19px;
}

.channel b {
  width: 17px;
  font-size: 10px;
  font-weight: 600;
}

.track {
  width: 103px;
  height: 6px;
  border: 1px solid #262626;
  background: #3c3c3c;
}

.amount {
  width: 34px;
  height: 19px;
  margin: 0 2px 0 6px;
  border: 1px solid #1a1a1a;
  background: #a0a0a0;
}

.channel span {
  font-size: 11px;
  font-weight: 500;
}

.bw {
  display: flex;
  width: 40px;
  height: 14px;
  margin: 1px 0 0 6px;
  border: 1px solid #111;
}

.bw i {
  flex: 1;
}

.black {
  background: #000;
}

.white {
  background: #fff;
}

.spectrum {
  width: 217px;
  height: 22px;
  margin: 10px 0 0 7px;
  border: 1px solid #151515;
  background:
    linear-gradient(#fff 0, #fff0 40%, #0000 52%, #000 100%),
    linear-gradient(90deg, #e30a2c, #fff11c 17%, #2fc43c 36%, #35d2e0 54%, #2a43ac 65%, #8f2299 82%, #e2118c 92%, #e50a2c);
}

/* swatches */
.swatch-panel {
  height: 180px;
}

.swatch-panel .tab.on {
  padding: 0 6px 0 8px;
}

.swatch-top {
  display: flex;
  justify-content: space-between;
  padding: 0 6px;
  height: 41px;
}

.swatch-top .proxy {
  margin-top: 7px;
}

.views {
  display: flex;
  height: 22px;
  margin-top: 7px;
  border: 1px solid #1b1b1b;
}

.views span {
  width: 25px;
  display: grid;
  place-items: center;
  background: #333;
}

.views .lit {
  background: #5a5a5a;
}

.swatch-box {
  display: flex;
  width: 229px;
  height: 100px;
  margin-left: 6px;
  border: 1px solid #222;
}

.swatch-list {
  flex: 1;
}

.swatch-row {
  display: flex;
  height: 14px;
}

.in-folder {
  margin-top: 2px;
}

.sw {
  width: 14px;
  height: 14px;
  border-right: 1px solid #666;
  border-bottom: 1px solid #666;
}

.sw.none {
  background: linear-gradient(135deg, #fff 44%, #c8101e 44% 56%, #fff 56%);
}

.sw.reg {
  background: #fff;
}

.sw.gray {
  background: linear-gradient(90deg, #fff, #222);
}

.sw.sun {
  background: linear-gradient(90deg, #ffe800, #ef7a2a);
}

.sw.sky {
  background:
    linear-gradient(90deg, #2a8fdc, #2a8fdc00),
    repeating-conic-gradient(#fff 0 25%, #9cc 0 50%) 0 0 / 4px 4px;
}

.sw.dot {
  background: radial-gradient(circle, #e4e4e4 0 4px, #111 5px);
}

.sw.leaf {
  background:
    radial-gradient(circle at 2px 3px, #fff 1px, #0000 2px),
    radial-gradient(circle at 7px 7px, #4fa82a 2px, #0000 3px),
    radial-gradient(circle at 11px 10px, #fff 1px, #0000 2px),
    repeating-conic-gradient(#8fd05c 0 25%, #dff2c4 0 50%) 0 0 / 6px 6px;
}

.sw.rug {
  background: repeating-conic-gradient(#8a5c48 0 25%, #cdbcb0 0 50%) 0 0 / 4px 4px;
}

.sw.dir {
  display: grid;
  place-items: center;
  background: #555;
}

.swatch-scroll {
  width: 12px;
  display: flex;
  flex-direction: column;
  align-items: center;
  justify-content: space-between;
  padding: 4px 0;
  background: #383838;
  border-left: 1px solid #2a2a2a;
}

.swatch-scroll .tri {
  border-top-color: #999;
  border-bottom-color: #999;
}

.swatch-tools {
  margin: 1px 0 0 9px;
}

/* gradient */
.gradient-panel {
  height: 235px;
}

.gradient-panel .tab.on {
  padding: 0 6px 0 4px;
}

.gradient-body {
  display: flex;
  height: 118px;
}

.gradient-left {
  width: 46px;
  padding: 7px 0 0 7px;
}

.gradient-left .proxy {
  margin-top: 7px;
}

.preview {
  display: flex;
  align-items: center;
  gap: 4px;
}

.big-fade {
  width: 30px;
  height: 30px;
  border: 1px solid #161616;
  background: linear-gradient(90deg, #fff, #8c8e94 55%, #22242a);
}

.reverse {
  margin: 10px 0 0 7px;
}

.gradient-form {
  width: 190px;
  padding-top: 3px;
}

.row {
  height: 26px;
  display: flex;
  align-items: center;
  gap: 5px;
  color: #999;
}

.row label {
  font-size: 11px;
}

.gradient-form .row > :first-child {
  margin-left: auto;
}

.gradient-form .row > :last-child {
  flex: none;
}

.row.lit label {
  color: #eee;
  font-weight: 600;
}

.combo {
  display: flex;
  width: 148px;
  height: 19px;
  border: 1px solid #1e1e1e;
  background: #4d4d4d;
}

.combo > i {
  flex: 1;
}

.joins {
  display: flex;
  width: 148px;
}

.joins svg {
  width: 23px;
  height: 19px;
  border: 1px solid #2a2a2a;
  background: #474747;
}

.num {
  display: flex;
  width: 67px;
  height: 19px;
  border: 1px solid #262626;
}

.gradient-form .num {
  margin: 2px 81px 0 0;
}

.num > i {
  flex: 1;
  background: #707070;
}

.num .arrow {
  width: 15px;
  background: #555;
}

.num .tri {
  border-top-color: #999;
}

.ramp {
  display: flex;
  align-items: center;
  gap: 11px;
  margin: 1px 0 23px 10px;
}

.ramp i {
  width: 196px;
  height: 20px;
  border: 1px solid #141414;
  background: linear-gradient(90deg, #fff, #85878d 55%, #38393d 85%, #000);
}

.stop {
  gap: 0;
}

.stop label {
  width: 50px;
  margin-left: 38px;
}

.stop .num {
  margin-left: -1px;
}

.folded .tabs {
  height: 18px;
}

.folded {
  height: 20px;
  border-top-width: 2px;
}

.folded .tab {
  padding: 0 5px 0 6px;
}

.folded .tab.strong,
.folded .tab.on {
  padding: 0 7px 0 8px;
}

/* open menu */
.view-menu {
  position: absolute;
  left: 417px;
  top: 6px;
  width: 414px;
  height: 713px;
  background: #f0f0f0;
  border: 1px solid #8b8b8b;
  box-shadow: 2px 2px 2px rgba(0, 0, 0, .45);
  color: #101010;
  font-size: 11.5px;
}

.scroll-edge {
  height: 19px;
  padding: 8px 0 0 19px;
  background: #f5f5f5;
}

.scroll-edge .tri {
  border-left-width: 5px;
  border-right-width: 5px;
  border-bottom-color: #8c8c8c;
}

.scroll-edge.bottom {
  padding-top: 7px;
}

.scroll-edge.bottom .tri {
  border-top-color: #000;
}

.menu-body {
  background: linear-gradient(90deg, #f1f1f1 28px, #dcdcdc 28px 29px, #fafafa 29px 30px, #f0f0f0 30px);
}

.menu-group {
  padding-bottom: 8px;
  background: linear-gradient(#d8d8d8 0 1px, #fff 1px 2px) 30px calc(100% - 2px) / 380px 2px no-repeat;
}

.menu-item {
  height: 22px;
  display: flex;
  align-items: center;
  line-height: 20px;
}

.menu-item.disabled {
  color: #777;
}

.gutter {
  width: 34px;
  padding-left: 2px;
  flex: none;
}

.check {
  width: 22px;
  height: 22px;
  display: grid;
  place-items: center;
  border: 1px solid #aecbe6;
  border-radius: 3px;
  background: #e8eef7;
}

.shortcut {
  margin: 0 20px 0 auto;
}

.submenu {
  margin: 0 11px 0 auto;
  border: 4px solid transparent;
  border-left: 5px solid #000;
  border-right: 0;
}

.cursor {
  position: absolute;
  left: 397px;
  top: 16px;
}

.watermark {
  position: absolute;
  left: 1024px;
  top: 652px;
}

.watermark text {
  fill: #1c1c1c;
  fill-opacity: .8;
  stroke: #7c7c7c;
  stroke-opacity: .75;
  stroke-width: 3px;
  stroke-linejoin: round;
  paint-order: stroke;
  font-family: Lato, sans-serif;
  font-size: 45px;
  font-weight: 500;
}
</style>
